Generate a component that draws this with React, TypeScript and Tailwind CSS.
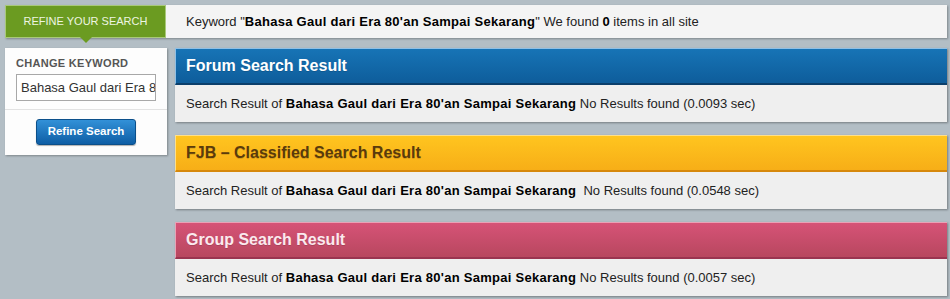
import React from 'react';

const KEYWORD = "Bahasa Gaul dari Era 80'an Sampai Sekarang";

type Section = {
  title: string;
  head: string;
  titleColor: string;
  gap: string;
  time: string;
};

const sections: Section[] = [
  {
    title: 'Forum Search Result',
    head: 'bg-gradient-to-b from-[#1774b6] to-[#0e5d9b] border-b-2 border-b-[#0b3f6b] border-t border-l border-t-[#8fc0e6] border-l-[#8fc0e6]',
    titleColor: 'text-white',
    gap: ' ',
    time: '0.0093',
  },
  {
    title: 'FJB \u2013 Classified Search Result',
    head: 'bg-gradient-to-b from-[#ffc51f] to-[#f7ae17] border-b-2 border-b-[#d6880b] border-t border-l border-t-[#ffe08a] border-l-[#ffe08a]',
    titleColor: 'text-[#5a3b0c]',
    gap: '\u00a0 ',
    time: '0.0548',
  },
  {
    title: 'Group Search Result',
    head: 'bg-gradient-to-b from-[#d65377] to-[#b8475f] border-b-2 border-b-[#9a3450] border-t border-l border-t-[#eaa2b6] border-l-[#eaa2b6]',
    titleColor: 'text-[#fbe9ee]',
    gap: ' ',
    time: '0.0057',
  },
];

function ResultBox({ s }: { s: Section }) {
  return (
    <div className="shadow-[1px_1px_2px_rgba(0,0,0,0.35)]">
      <div className={`flex h-[37px] items-center pl-[10px] ${s.head}`}>
        <span className={`text-[16px] font-bold ${s.titleColor} [text-shadow:0_1px_0_rgba(0,0,0,0.15)]`}>{s.title}</span>
      </div>
      <div className="flex h-[37px] items-center bg-[#efefef] pl-[11px] text-[13px] text-[#222]">
        <span>
          Search Result of <b className="tracking-[0.27px] text-black">{KEYWORD}</b>
          {s.gap}No Results found ({s.time} sec)
        </span>
      </div>
    </div>
  );
}

export default function App() {
  return (
    <div
      className="min-h-[299px] w-[950px] bg-[#b3bec5] p-[5px] pr-[3px]"
      style={{ fontFamily: '"Liberation Sans", Arial, sans-serif' }}
    >
      {/* top bar */}
      <div className="flex h-[33px] bg-[#f4f4f4] shadow-[1px_1px_2px_rgba(0,0,0,0.3)]">
        <div className="relative flex w-[161px] items-center justify-center border border-[#a9c97a] bg-[#6b9b21] text-[11px] text-[#eef5e2]">
          REFINE YOUR SEARCH
          <span className="absolute left-[74px] top-full h-0 w-0 border-x-[6px] border-t-[6px] border-x-transparent border-t-[#6b9b21]" />
        </div>
        <div className="flex items-center pl-[20px] text-[13px] text-[#222]">
          <span>
            Keyword "<b className="tracking-[0.27px] text-black">{KEYWORD}</b>" We found <b className="text-black">0</b> items in all site
          </span>
        </div>
      </div>

      <div className="mt-[10px] flex gap-[8px]">
        {/* left panel */}
        <div className="h-[107px] w-[162px] shrink-0 bg-[#fdfdfd] shadow-[1px_1px_2px_rgba(0,0,0,0.3)]">
          <div className="border-b border-[#e2e2e2] px-[11px] pb-[8px] pt-[9px]">
            <div className="text-[11px] font-bold leading-[13px] tracking-[0.3px] text-[#555]">CHANGE KEYWORD</div>
            <div className="mt-[4px] h-[27px] w-[140px] overflow-hidden whitespace-nowrap border border-[#a8a8a8] bg-white pl-[4px] text-[13px] leading-[25px] text-[#333]">
              {KEYWORD}
            </div>
          </div>
          <div className="flex justify-center pt-[9px]">
            <button className="h-[26px] w-[100px] rounded-[3px] border border-[#0b4f8a] bg-gradient-to-b from-[#3291d8] to-[#0e5ea5] text-[11.5px] font-bold text-white shadow-[0_1px_1px_rgba(0,0,0,0.3)]">
              Refine Search
            </button>
          </div>
        </div>

        {/* results */}
        <div className="flex w-[772px] flex-col gap-[13px]">
          {sections.map((s) => (
            <ResultBox key={s.title} s={s} />
          ))}
        </div>
      </div>
    </div>
  );
}
